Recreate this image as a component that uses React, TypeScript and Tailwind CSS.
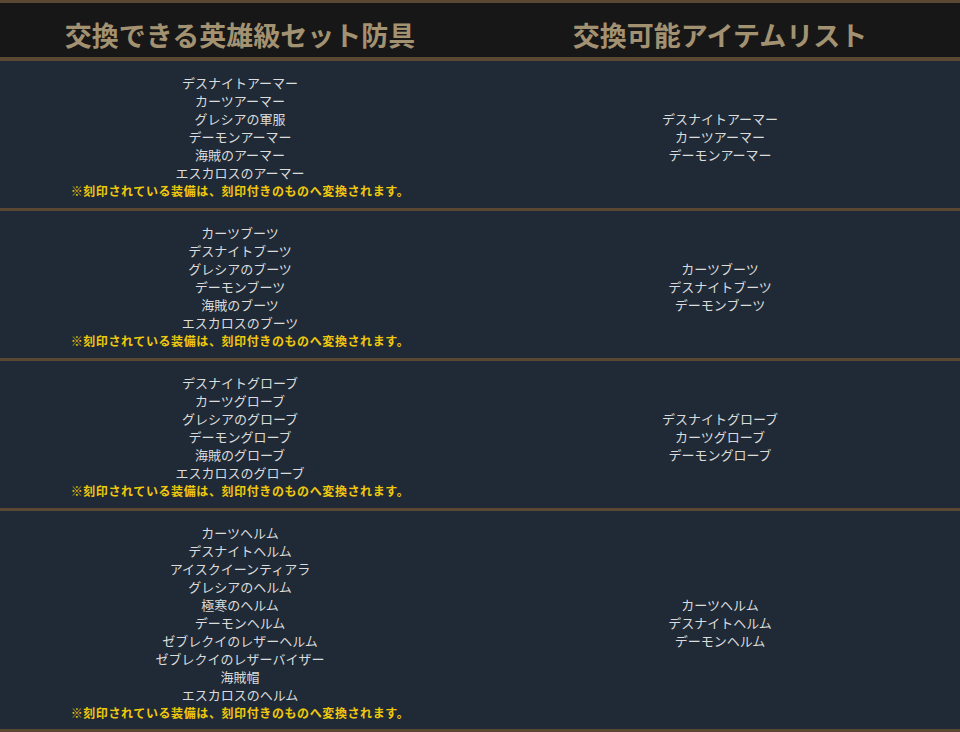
const rows: { left: string[]; right: string[] }[] = [
  {
    left: ['デスナイトアーマー', 'カーツアーマー', 'グレシアの軍服', 'デーモンアーマー', '海賊のアーマー', 'エスカロスのアーマー'],
    right: ['デスナイトアーマー', 'カーツアーマー', 'デーモンアーマー'],
  },
  {
    left: ['カーツブーツ', 'デスナイトブーツ', 'グレシアのブーツ', 'デーモンブーツ', '海賊のブーツ', 'エスカロスのブーツ'],
    right: ['カーツブーツ', 'デスナイトブーツ', 'デーモンブーツ'],
  },
  {
    left: ['デスナイトグローブ', 'カーツグローブ', 'グレシアのグローブ', 'デーモングローブ', '海賊のグローブ', 'エスカロスのグローブ'],
    right: ['デスナイトグローブ', 'カーツグローブ', 'デーモングローブ'],
  },
  {
    left: [
      'カーツヘルム',
      'デスナイトヘルム',
      'アイスクイーンティアラ',
      'グレシアのヘルム',
      '極寒のヘルム',
      'デーモンヘルム',
      'ゼブレクイのレザーヘルム',
      'ゼブレクイのレザーバイザー',
      '海賊帽',
      'エスカロスのヘルム',
    ],
    right: ['カーツヘルム', 'デスナイトヘルム', 'デーモンヘルム'],
  },
];

const NOTE = '※刻印されている装備は、刻印付きのものへ変換されます。';

export default function App() {
  return (
    <div className="w-[960px] h-[732px] bg-[#1f2a36] font-['Noto_Sans_CJK_JP',sans-serif] border-t-[3px] border-b-[3px] border-[#5a4833] overflow-hidden">
      {/* header */}
      <div className="grid grid-cols-2 h-[58px] bg-[#181717] border-b-4 border-[#5a4833]">
        <div className="flex items-center justify-center pt-[10px] text-[27px] font-bold text-[#a39272]">
          交換できる英雄級セット防具
        </div>
        <div className="flex items-center justify-center pt-[10px] text-[27px] font-bold text-[#a39272]">
          交換可能アイテムリスト
        </div>
      </div>

      {rows.map((row, i) => (
        <div
          key={i}
          className={
            'grid grid-cols-2 text-[13px] leading-[18px] text-[#dcdcdc] ' +
            (i < rows.length - 1 ? 'border-b-[3px] border-[#5a4833]' : '')
          }
        >
          <div className="flex flex-col items-center justify-center pt-[13px] pb-[8px]">
            {row.left.map((t) => (
              <div key={t}>{t}</div>
            ))}
            <div className="text-[12px] font-bold text-[#f0c90c] tracking-[0.6px]">{NOTE}</div>
          </div>
          <div className="flex flex-col items-center justify-center pt-[4px]">
            {row.right.map((t) => (
              <div key={t}>{t}</div>
            ))}
          </div>
        </div>
      ))}
    </div>
  );
}
